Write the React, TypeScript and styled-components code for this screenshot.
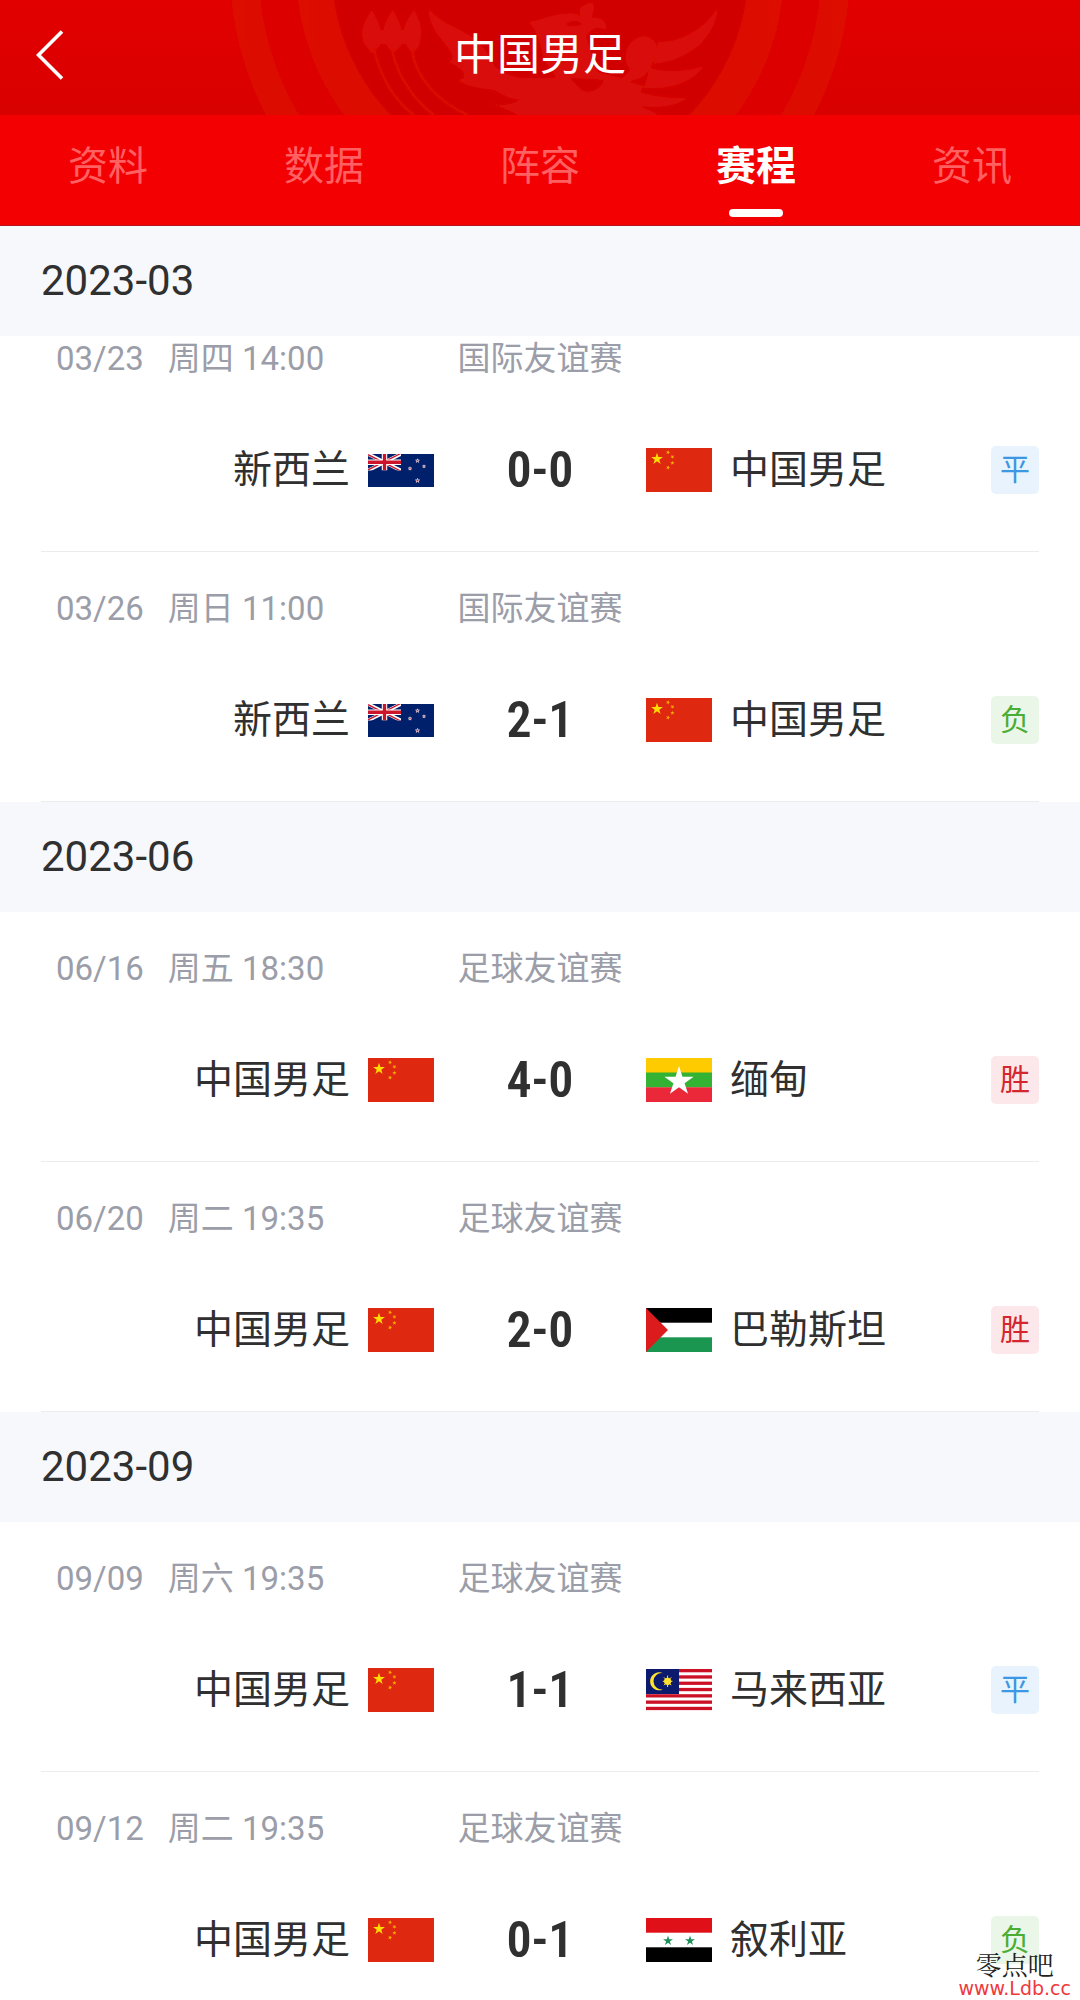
import React, { useState } from "react";
import styled, { createGlobalStyle, css } from "styled-components";

const GlobalStyle = createGlobalStyle`
  *, *::before, *::after { box-sizing: border-box; }
  body {
    margin: 0;
    background: #fff;
    color: #303030;
    font-family: Roboto, "Noto Sans CJK SC", sans-serif;
  }
`;

const Screen = styled.div`
  position: relative;
  height: 100vh;
  display: flex;
  flex-direction: column;
  overflow: hidden;
`;

/* ---------- header ---------- */

const Header = styled.header`
  position: relative;
  flex: none;
  height: 115px;
  padding: 0 36px 6px;
  display: grid;
  grid-template-columns: 1fr auto 1fr;
  align-items: center;
  color: #fff;
  background: linear-gradient(#e20000, #d90000);
  overflow: hidden;
`;

const Crest = styled.svg`
  position: absolute;
  top: 0;
  left: 50%;
  width: 640px;
  height: 115px;
  margin-left: -320px;
`;

const BackButton = styled.button`
  position: relative;
  justify-self: start;
  display: flex;
  padding: 0;
  border: 0;
  background: none;
  color: inherit;
  cursor: pointer;
`;

const Title = styled.h1`
  position: relative;
  margin: 0;
  font-size: 43px;
  line-height: 60px;
  font-weight: 400;
`;

/* ---------- tabs ---------- */

const TabBar = styled.nav`
  flex: none;
  display: grid;
  grid-template-columns: repeat(5, 1fr);
  background: #f30003;
  border-bottom: 1px solid #b8141c;
`;

const Tab = styled.button<{ $active: boolean }>`
  display: flex;
  flex-direction: column;
  align-items: center;
  gap: 17px;
  padding: 27px 0 8px;
  border: 0;
  background: none;
  font-family: inherit;
  font-size: 40px;
  line-height: 50px;
  cursor: pointer;
  color: ${(p) => (p.$active ? "#fff" : "#ff6062")};
  font-weight: ${(p) => (p.$active ? 700 : 400)};

  &::after {
    content: "";
    width: 54px;
    height: 8px;
    border-radius: 4px;
    background: ${(p) => (p.$active ? "#fff" : "transparent")};
  }
`;

/* ---------- schedule ---------- */

const Schedule = styled.main`
  flex: 1;
  min-height: 0;
  overflow-y: auto;
  scrollbar-width: none;
`;

const MonthTitle = styled.h2`
  margin: 0;
  padding: 30px 41px;
  background: #f7f8fb;
  font-size: 42px;
  line-height: 50px;
  font-weight: 400;
`;

const MatchList = styled.ul`
  list-style: none;
  margin: 0;
  padding: 0 41px;
`;

const MatchRow = styled.li<{ $tucked: boolean }>`
  padding: ${(p) => (p.$tucked ? 3 : 37)}px 0 57px;
  border-bottom: 1px solid #ebecee;
`;

const MetaLine = styled.div`
  display: grid;
  grid-template-columns: 1fr auto 1fr;
  padding: 0 15px;
  margin-bottom: 67px;
  font-size: 33px;
  line-height: 40px;
  color: #9b9da8;
`;

const Kickoff = styled.time`
  display: flex;
  gap: 24px;
  white-space: nowrap;
`;

const ScoreLine = styled.div`
  display: grid;
  grid-template-columns: 1fr 212px 1fr;
  align-items: center;
  height: 48px;
`;

const Side = styled.div<{ $home?: boolean }>`
  display: flex;
  align-items: center;
  gap: 18px;
  ${(p) =>
    p.$home &&
    css`
      justify-content: flex-end;
    `}
`;

const TeamName = styled.span`
  font-size: 39px;
  line-height: 48px;
  white-space: nowrap;
`;

const Score = styled.strong`
  text-align: center;
  font-family: "Roboto Condensed", Roboto, sans-serif;
  font-size: 50px;
  line-height: 48px;
  font-weight: 600;
`;

type Outcome = "win" | "draw" | "loss";

const outcomes: Record<Outcome, { label: string; ink: string; fill: string }> = {
  win: { label: "胜", ink: "#d3262f", fill: "#fce8ea" },
  draw: { label: "平", ink: "#3c98e2", fill: "#e8f3fe" },
  loss: { label: "负", ink: "#4aad34", fill: "#eaf7e8" },
};

const Badge = styled.span<{ $outcome: Outcome }>`
  flex: none;
  width: 48px;
  height: 48px;
  margin-left: auto;
  border-radius: 5px;
  text-align: center;
  font-size: 30px;
  line-height: 48px;
  color: ${(p) => outcomes[p.$outcome].ink};
  background: ${(p) => outcomes[p.$outcome].fill};
`;

const FlagSvg = styled.svg`
  flex: none;
  display: block;
  width: 66px;
`;

/* ---------- watermark ---------- */

const Watermark = styled.div`
  position: absolute;
  right: 9px;
  bottom: 0;
  display: flex;
  flex-direction: column;
  align-items: center;
  pointer-events: none;
`;

const WatermarkName = styled.span`
  font-family: "Noto Serif CJK SC", "Noto Sans CJK SC", serif;
  font-size: 26px;
  line-height: 26px;
  color: #222;
`;

const WatermarkSite = styled.span`
  font-family: "DejaVu Sans", sans-serif;
  font-size: 19px;
  line-height: 23px;
  color: #f0383c;
`;

/* ---------- flags ---------- */

function starPoints(cx: number, cy: number, r: number, turn = 0) {
  return Array.from({ length: 10 }, (_, i) => {
    const radius = i % 2 ? r * 0.382 : r;
    const a = ((i * 36 - 90 + turn) * Math.PI) / 180;
    return `${(cx + radius * Math.cos(a)).toFixed(2)},${(cy + radius * Math.sin(a)).toFixed(2)}`;
  }).join(" ");
}

const Star = ({ x, y, r, turn, ...rest }: { x: number; y: number; r: number; turn?: number; fill: string; stroke?: string; strokeWidth?: number }) => (
  <polygon points={starPoints(x, y, r, turn)} {...rest} />
);

const ChinaFlag = () => (
  <FlagSvg viewBox="0 0 66 44" aria-hidden="true">
    <rect width="66" height="44" fill="#de2910" />
    <Star x={11} y={11} r={6.2} fill="#ffde00" />
    <Star x={22} y={4.4} r={2.2} turn={23} fill="#ffb400" />
    <Star x={26.4} y={8.8} r={2.2} turn={46} fill="#ffb400" />
    <Star x={26.4} y={15} r={2.2} fill="#ffb400" />
    <Star x={22} y={19.6} r={2.2} turn={21} fill="#ffb400" />
  </FlagSvg>
);

const NewZealandFlag = () => (
  <FlagSvg viewBox="0 0 66 33" aria-hidden="true">
    <rect width="66" height="33" fill="#00206b" />
    <svg width="33" height="16.5" viewBox="0 0 60 30">
      <path d="M0 0L60 30M60 0L0 30" stroke="#fff" strokeWidth="6.5" />
      <path d="M0 0L30 15M60 30L30 15" stroke="#cc142b" strokeWidth="2.4" transform="translate(0 1.2)" />
      <path d="M60 0L30 15M0 30L30 15" stroke="#cc142b" strokeWidth="2.4" transform="translate(0 -1.2)" />
      <path d="M30 0V30M0 15H60" stroke="#fff" strokeWidth="10" />
      <path d="M30 0V30M0 15H60" stroke="#cc142b" strokeWidth="6" />
    </svg>
    <Star x={49.5} y={6.8} r={2} fill="#cc142b" stroke="#fff" strokeWidth={0.6} />
    <Star x={42} y={14.6} r={1.8} fill="#cc142b" stroke="#fff" strokeWidth={0.6} />
    <Star x={56} y={12.4} r={1.6} fill="#cc142b" stroke="#fff" strokeWidth={0.6} />
    <Star x={49.5} y={26.6} r={2.2} fill="#cc142b" stroke="#fff" strokeWidth={0.6} />
  </FlagSvg>
);

const MyanmarFlag = () => (
  <FlagSvg viewBox="0 0 66 44" aria-hidden="true">
    <rect width="66" height="15" fill="#fecb00" />
    <rect y="14.5" width="66" height="15" fill="#34b233" />
    <rect y="29.3" width="66" height="14.7" fill="#ea2839" />
    <Star x={33} y={23.4} r={15.4} fill="#fff" />
  </FlagSvg>
);

const PalestineFlag = () => (
  <FlagSvg viewBox="0 0 66 44" aria-hidden="true">
    <rect width="66" height="44" fill="#fff" />
    <rect width="66" height="14.7" fill="#000" />
    <rect y="29.3" width="66" height="14.7" fill="#1a9650" />
    <path d="M0 0L22 22L0 44Z" fill="#dc1c1c" />
  </FlagSvg>
);

const MalaysiaFlag = () => (
  <FlagSvg viewBox="0 0 66 42" aria-hidden="true">
    <rect width="66" height="42" fill="#fff" />
    {Array.from({ length: 7 }, (_, i) => (
      <rect key={i} y={i * 6.3} width="66" height="3.3" fill="#cc1126" />
    ))}
    <rect width="33" height="25" fill="#0b1a6c" />
    <path d="M17 4.2A9 9 0 1 0 17 20.4A8.2 8.2 0 1 1 17 4.2Z" fill="#ffe22e" />
    <circle cx="21.6" cy="12.3" r="3.6" fill="#ffe22e" />
    <path d="M21.6 6.6V18M16.8 12.3H26.4M18 8.4L25.2 16.2M25.2 8.4L18 16.2" stroke="#ffe22e" strokeWidth="1" />
  </FlagSvg>
);

const SyriaFlag = () => (
  <FlagSvg viewBox="0 0 66 44" aria-hidden="true">
    <rect width="66" height="44" fill="#fff" />
    <rect width="66" height="14.7" fill="#e01018" />
    <rect y="29.3" width="66" height="14.7" fill="#000" />
    <Star x={22} y={22.8} r={5.2} fill="#1b8f56" />
    <Star x={44} y={22.8} r={5.2} fill="#1b8f56" />
  </FlagSvg>
);

const teams = {
  china: { name: "中国男足", Flag: ChinaFlag },
  newZealand: { name: "新西兰", Flag: NewZealandFlag },
  myanmar: { name: "缅甸", Flag: MyanmarFlag },
  palestine: { name: "巴勒斯坦", Flag: PalestineFlag },
  malaysia: { name: "马来西亚", Flag: MalaysiaFlag },
  syria: { name: "叙利亚", Flag: SyriaFlag },
};

/* ---------- data ---------- */

interface Match {
  date: string;
  time: string;
  league: string;
  home: keyof typeof teams;
  away: keyof typeof teams;
  score: string;
  outcome: Outcome;
}

const months: { month: string; matches: Match[] }[] = [
  {
    month: "2023-03",
    matches: [
      { date: "03/23", time: "周四 14:00", league: "国际友谊赛", home: "newZealand", away: "china", score: "0-0", outcome: "draw" },
      { date: "03/26", time: "周日 11:00", league: "国际友谊赛", home: "newZealand", away: "china", score: "2-1", outcome: "loss" },
    ],
  },
  {
    month: "2023-06",
    matches: [
      { date: "06/16", time: "周五 18:30", league: "足球友谊赛", home: "china", away: "myanmar", score: "4-0", outcome: "win" },
      { date: "06/20", time: "周二 19:35", league: "足球友谊赛", home: "china", away: "palestine", score: "2-0", outcome: "win" },
    ],
  },
  {
    month: "2023-09",
    matches: [
      { date: "09/09", time: "周六 19:35", league: "足球友谊赛", home: "china", away: "malaysia", score: "1-1", outcome: "draw" },
      { date: "09/12", time: "周二 19:35", league: "足球友谊赛", home: "china", away: "syria", score: "0-1", outcome: "loss" },
    ],
  },
];

const tabs = ["资料", "数据", "阵容", "赛程", "资讯"];

/* ---------- parts ---------- */

const HeaderCrest = () => (
  <Crest viewBox="0 0 640 115" aria-hidden="true">
    <defs>
      <linearGradient id="ring">
        <stop offset="0" stopColor="#dd0b06" />
        <stop offset="0.5" stopColor="#da0503" />
        <stop offset="1" stopColor="#dd0b06" />
      </linearGradient>
      <filter id="soft" x="-5%" y="-5%" width="110%" height="110%">
        <feGaussianBlur stdDeviation="0.8" />
      </filter>
    </defs>
    <g filter="url(#soft)">
      <circle cx="320" cy="-30" r="310" fill="url(#ring)" />
      <circle cx="320" cy="-30" r="281" fill="#dc0000" />
      <circle cx="320" cy="-30" r="244" fill="url(#ring)" />
      <circle cx="320" cy="-30" r="208" fill="#d10000" />
      <g fill="#da0b07">
        <path d="M152 10C141 24 139 38 146 46L152 54L160 46C164 32 158 20 152 10Z" />
        <path d="M173 10C162 24 160 38 167 46L173 54L181 46C185 32 179 20 173 10Z" />
        <path d="M194 10C183 24 180 38 187 46L192 54L199 46C204 32 200 20 194 10Z" />
        <path d="M146 30H198V44H146Z" />
        <path d="M209 9C222 26 250 30 262 46C276 62 268 70 300 78H342C332 92 350 104 344 115H298C284 108 272 104 262 101C284 108 292 104 300 100C284 98 280 92 274 90C258 88 244 86 238 80C252 78 240 66 228 62C240 58 222 42 216 32C211 24 208 16 209 9Z" />
        <path d="M308 22C322 20 332 14 344 14C352 12 358 14 362 17C354 8 366 4 372 2C376 8 372 14 372 18C380 16 388 22 386 30C378 26 372 28 366 36L378 72L402 78L410 70C400 56 408 38 424 36C438 38 440 50 434 60C430 70 426 78 414 80C404 84 392 96 402 115H326C344 100 338 78 330 68C318 52 322 34 308 22Z" />
        <path d="M438 42C464 42 488 26 498 6C496 38 470 60 434 64Z" />
        <path d="M430 68C454 74 470 70 484 66C472 84 446 90 424 88Z" />
        <path d="M396 78L424 86L420 92C440 98 454 98 468 98C454 108 434 108 420 106L440 115H390Z" />
      </g>
      <path
        d="M154 48C160 78 176 102 194 115M172 50C178 78 196 102 214 115M192 50C196 78 218 102 248 115"
        fill="none"
        stroke="#d90805"
        strokeWidth="3"
      />
      <path d="M346 24C352 20 358 20 362 24C356 27 350 27 346 24Z" fill="#cf0000" />
      <path d="M350 78L384 80C380 90 370 94 362 90Z" fill="#cf0000" />
    </g>
  </Crest>
);

const MatchItem = ({ match, tucked }: { match: Match; tucked: boolean }) => {
  const home = teams[match.home];
  const away = teams[match.away];
  return (
    <MatchRow $tucked={tucked}>
      <MetaLine>
        <Kickoff>
          <span>{match.date}</span>
          <span>{match.time}</span>
        </Kickoff>
        <span>{match.league}</span>
      </MetaLine>
      <ScoreLine>
        <Side $home>
          <TeamName>{home.name}</TeamName>
          <home.Flag />
        </Side>
        <Score>{match.score}</Score>
        <Side>
          <away.Flag />
          <TeamName>{away.name}</TeamName>
          <Badge $outcome={match.outcome}>{outcomes[match.outcome].label}</Badge>
        </Side>
      </ScoreLine>
    </MatchRow>
  );
};

export default function App() {
  const [active, setActive] = useState("赛程");
  return (
    <Screen>
      <GlobalStyle />
      <Header>
        <HeaderCrest />
        <BackButton type="button" aria-label="返回">
          <svg width="28" height="50" viewBox="0 0 28 50" fill="none" stroke="#fff" strokeWidth="3.6">
            <path d="M26 1.5L2.5 25L26 48.5" />
          </svg>
        </BackButton>
        <Title>中国男足</Title>
      </Header>
      <TabBar>
        {tabs.map((tab) => (
          <Tab key={tab} type="button" $active={tab === active} onClick={() => setActive(tab)}>
            {tab}
          </Tab>
        ))}
      </TabBar>
      <Schedule>
        {months.map(({ month, matches }, m) => (
          <section key={month}>
            <MonthTitle>{month}</MonthTitle>
            <MatchList>
              {matches.map((match, i) => (
                <MatchItem key={match.date} match={match} tucked={m === 0 && i === 0} />
              ))}
            </MatchList>
          </section>
        ))}
      </Schedule>
      <Watermark>
        <WatermarkName>零点吧</WatermarkName>
        <WatermarkSite>www.Ldb.cc</WatermarkSite>
      </Watermark>
    </Screen>
  );
}
